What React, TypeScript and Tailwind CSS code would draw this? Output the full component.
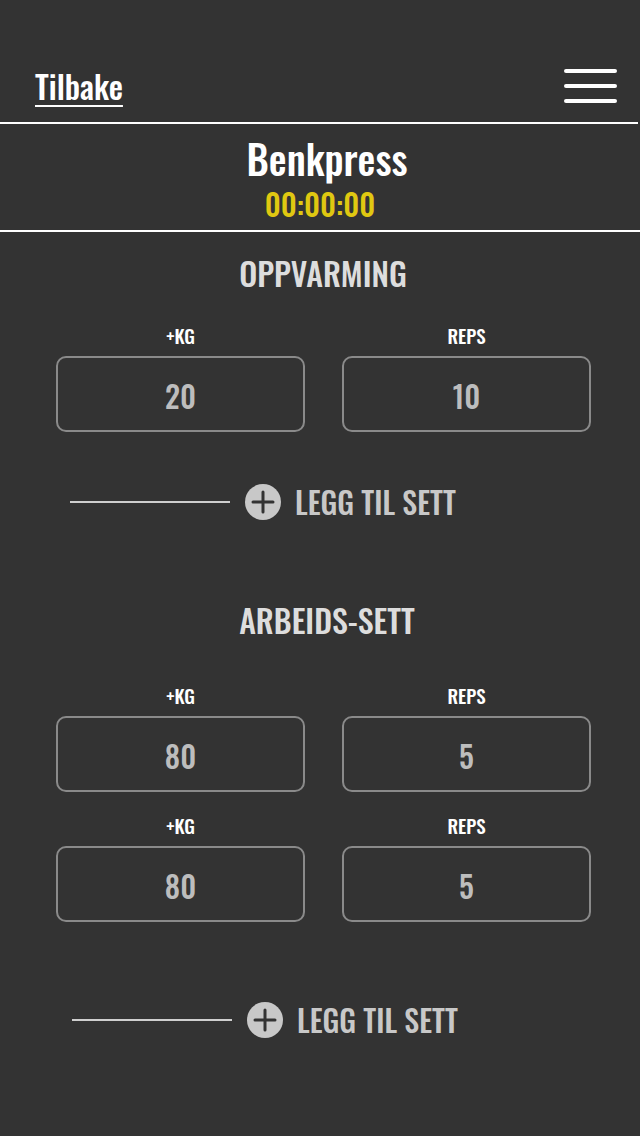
const font = "font-['Oswald','Liberation_Sans_Narrow','DejaVu_Sans_Condensed',sans-serif]";

const SetRow = ({kg, reps}: {kg: string; reps: string}) => {
    return <div className="grid grid-cols-[249px_249px] gap-x-[37px]">
        <div className="flex flex-col items-center">
            <span className="text-[19px] leading-[24px] font-medium text-white h-[24px]">+KG</span>
            <div className="mt-[9px] w-full h-[76px] border-2 border-[#8a8a8a] rounded-[10px] flex items-center justify-center">
                <span className="mt-[4px] text-[30px] leading-[40px] font-medium text-[#bdbdbd]">{kg}</span>
            </div>
        </div>
        <div className="flex flex-col items-center">
            <span className="text-[19px] leading-[24px] font-medium text-white h-[24px]">REPS</span>
            <div className="mt-[9px] w-full h-[76px] border-2 border-[#8a8a8a] rounded-[10px] flex items-center justify-center">
                <span className="mt-[4px] text-[30px] leading-[40px] font-medium text-[#bdbdbd]">{reps}</span>
            </div>
        </div>
    </div>
}

const AddSet = ({offset}: {offset: string}) => {
    return <div className={`flex items-center h-[40px] ${offset}`}>
        <span className="w-[160px] h-[2px] bg-[#cfcfcf]" />
        <svg width="36" height="36" viewBox="0 0 36 36" className="ml-[15px]">
            <circle cx="18" cy="18" r="18" fill="#c8c8c8" />
            <path d="M18 8v20M8 18h20" stroke="#333333" strokeWidth="3" strokeLinecap="round" />
        </svg>
        <span className="ml-[14px] text-[30px] leading-none font-medium text-[#c8c8c8]">LEGG TIL SETT</span>
    </div>
}

const App = () => {
    return <div className={`w-[640px] min-h-[1136px] bg-[#333333] ${font}`}>
        <div className="h-[122px] pt-[50px] pl-[35px] pr-[23px] flex items-center justify-between">
            <span className="text-[32px] leading-none font-medium text-white underline decoration-2 underline-offset-[5px]">Tilbake</span>
            <div className="flex flex-col gap-[11px] w-[53px]">
                <span className="h-[4px] rounded-full bg-white" />
                <span className="h-[4px] rounded-full bg-white" />
                <span className="h-[4px] rounded-full bg-white" />
            </div>
        </div>
        <div className="w-[638px] h-[2px] bg-white" />
        <div className="h-[106px] flex flex-col items-center pt-[15px]">
            <h1 className="ml-[14px] text-[40px] leading-[38px] font-medium text-white">Benkpress</h1>
            <span className="mt-[12px] text-[30px] leading-[30px] font-medium text-[#e0c811]">00:00:00</span>
        </div>
        <div className="w-[640px] h-[2px] bg-white" />

        <div className="flex justify-center pl-[6px] mt-[21px]">
            <h2 className="text-[32px] leading-[40px] font-medium text-[#dddddd]">OPPVARMING</h2>
        </div>
        <div className="ml-[56px] mt-[30px]">
            <SetRow kg="20" reps="10" />
        </div>
        <AddSet offset="ml-[70px] mt-[50px]" />

        <div className="flex justify-center pl-[14px] mt-[78px]">
            <h2 className="text-[32px] leading-[40px] font-medium text-[#dddddd]">ARBEIDS-SETT</h2>
        </div>
        <div className="ml-[56px] mt-[43px] flex flex-col gap-[21px]">
            <SetRow kg="80" reps="5" />
            <SetRow kg="80" reps="5" />
        </div>
        <AddSet offset="ml-[72px] mt-[78px]" />
    </div>
}

export default App;
